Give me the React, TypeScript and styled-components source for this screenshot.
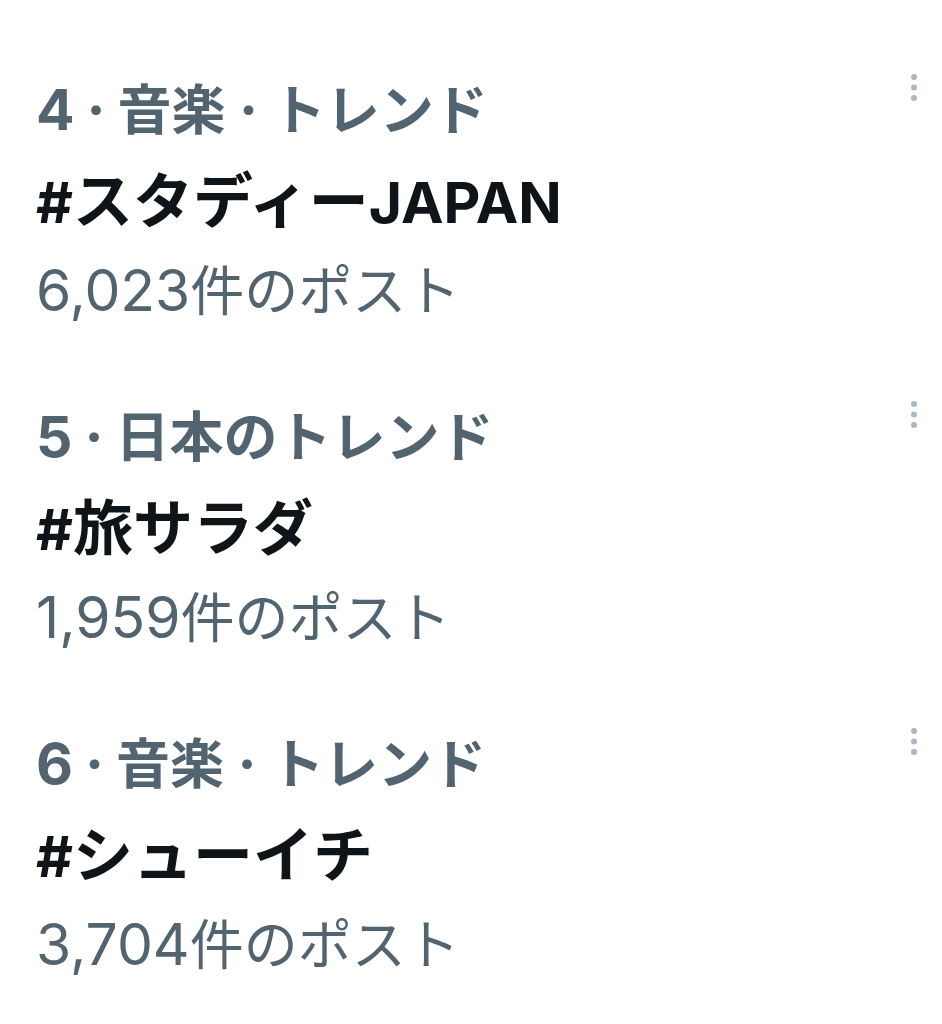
import React from 'react';
import styled, { createGlobalStyle } from 'styled-components';

const GlobalStyle = createGlobalStyle`
  html, body {
    margin: 0;
    padding: 0;
    background: #ffffff;
  }
  body {
    font-family: "Noto Sans CJK JP", "Noto Sans", sans-serif;
  }
`;

const TrendList = styled.div`
  display: flex;
  flex-direction: column;
  padding-top: 34px;
`;

const TrendItem = styled.div`
  display: flex;
  justify-content: space-between;
  align-items: flex-start;
  padding: 28px 25px 28px 36px;
`;

const TrendText = styled.div`
  display: flex;
  flex-direction: column;
`;

// meta lines (rank/category, post count) are smaller than the trend name
const TrendLine = styled.div<{ $bold?: boolean; $dark?: boolean; $size: number; $height: number }>`
  font-family: "Noto Sans CJK JP", sans-serif;
  font-size: ${p => p.$size}px;
  line-height: ${p => p.$height}px;
  height: ${p => p.$height}px;
  font-weight: ${p => (p.$bold ? 700 : 400)};
  color: ${p => (p.$dark ? '#0f1419' : '#536471')};
  white-space: nowrap;
`;

// latin runs (digits, #, JAPAN) render larger and wider, like Chirp next to the CJK system font
const Latin = styled.span`
  font-family: Inter, "Liberation Sans", sans-serif;
  font-size: 57px;
  line-height: 0;
`;

const RankDot = styled(Latin)`
  margin: 0 12px;
`;

const MoreButton = styled.div`
  display: flex;
  margin-top: 12px;
`;

interface Trend {
  rank: number;
  category: string;
  name: string;
  posts: string;
}

const trends: Trend[] = [
  { rank: 4, category: '音楽 · トレンド', name: '#スタディーJAPAN', posts: '6,023' },
  { rank: 5, category: '日本のトレンド', name: '#旅サラダ', posts: '1,959' },
  { rank: 6, category: '音楽 · トレンド', name: '#シューイチ', posts: '3,704' },
];

const CJK = /([\u3000-\u30ff\u4e00-\u9fff\uff00-\uffef]+)/;

const Mixed = ({ text }: { text: string }) => (
  <>
    {text.split(CJK).filter(Boolean).map((run, i) =>
      CJK.test(run) ? <React.Fragment key={i}>{run}</React.Fragment> : <Latin key={i}>{run}</Latin>
    )}
  </>
);

const MoreIcon = () => (
  <svg width="6" height="28" viewBox="0 0 6 28">
    <circle cx="3" cy="3" r="3" fill="#aab8c2" />
    <circle cx="3" cy="13.5" r="3" fill="#aab8c2" />
    <circle cx="3" cy="24" r="3" fill="#aab8c2" />
  </svg>
);

const App: React.FC = () => {
  return (
    <>
      <GlobalStyle />
      <TrendList>
        {trends.map(t => (
          <TrendItem key={t.rank}>
            <TrendText>
              <TrendLine $bold $size={54} $height={89}>
                <Latin>{t.rank}</Latin>
                <RankDot>·</RankDot>
                <Mixed text={t.category} />
              </TrendLine>
              <TrendLine $bold $dark $size={60} $height={92}>
                <Mixed text={t.name} />
              </TrendLine>
              <TrendLine $size={54} $height={90}>
                <Mixed text={`${t.posts}件のポスト`} />
              </TrendLine>
            </TrendText>
            <MoreButton>
              <MoreIcon />
            </MoreButton>
          </TrendItem>
        ))}
      </TrendList>
    </>
  );
};

export default App;
